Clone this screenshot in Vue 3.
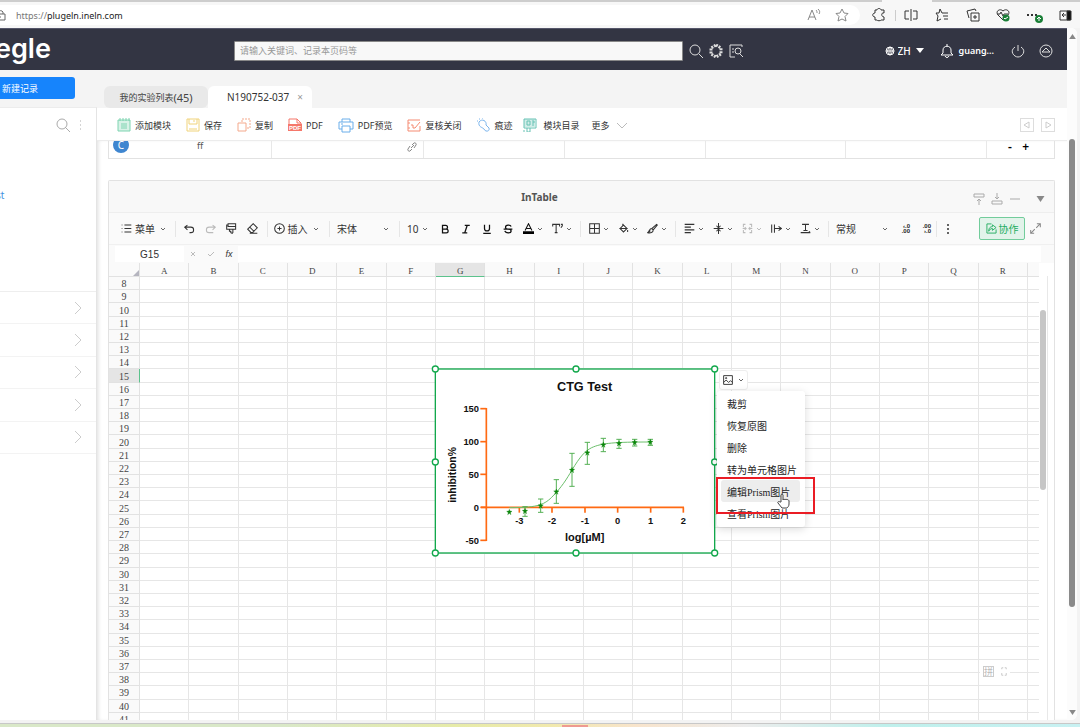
<script setup>
import { ref } from 'vue'

const columns = 'ABCDEFGHIJKLMNOPQR'.split('')
const rows = Array.from({ length: 34 }, (_, i) => i + 8)
const selectedColumn = 'G'
const selectedRow = 15

const keyword = ref('')
const cellName = ref('G15')
const formula = ref('')

const menuItems = ['裁剪', '恢复原图', '删除', '转为单元格图片', '编辑Prism图片', '查看Prism图片']
const activeItem = '编辑Prism图片'

const editTools = [
  { label: '撤销', d: 'M5 3 1 6l4 4M1 6h9a4 4 0 0 1 0 8H8' },
  { label: '重做', d: 'M11 3l4 3-4 4M15 6H6a4 4 0 0 0 0 8h6', muted: true },
  { label: '格式刷', d: 'M3 1h11v4H3zM3 3H1v6h13V3M5 9v3h2v2l2 1 1-1V9' },
  { label: '清除', d: 'M1 9l8-8 6 6-7 7H6zM4 6l6 6M4 15h11' }
]
const textTools = [
  { label: '加粗', d: 'M4 2h5a3 3 0 0 1 0 6H4zM4 8h6a3 3 0 0 1 0 6H4z' },
  { label: '斜体', d: 'M6 2h8M2 14h8M10 2 6 14' },
  { label: '下划线', d: 'M4 1v6a4 4 0 0 0 8 0V1M2 15h12' },
  { label: '删除线', d: 'M13 4c-1-3-9-3-9 1 0 2 2 3 4 3s5 1 5 3c0 4-9 4-10 0M1 8h14' }
]
const cellTools = [
  { label: '边框', d: 'M1 1h14v14H1zM8 1v14M1 8h14' },
  { label: '填充', d: 'M7 1v4M3 8l5-5 5 5-5 5zM3 8h10L8 13zM14 10v3' },
  { label: '样式', d: 'M14 2 7 8l2 2 6-7zM7 8c-4 0-3 4-6 6 4 1 8 0 8-4M5 11l-2 2' }
]
const alignTools = [
  { label: '水平对齐', d: 'M1 2h14M1 6h9M1 10h14M1 14h9' },
  { label: '垂直对齐', d: 'M1 8h14M8 0v6M5 4l3 3 3-3M8 16v-6M5 12l3-3 3 3' },
  { label: '合并', d: 'M5 2H2v4M11 2h3v4M5 14H2v-4M11 14h3v-4M1 8h5M15 8h-5M4 6l2 2-2 2M12 6l-2 2 2 2', muted: true },
  { label: '换行', d: 'M1 2v12M5 2v12M5 8h10M11 5l4 3-4 3' },
  { label: '旋转', d: 'M3 2h10M8 2v9M5 11h6M1 14h14M13 12l2 2' }
]

const points = [
  { x: 253, y: 471 },
  { x: 300, y: 468, top: 455, bottom: 484 },
  { x: 347, y: 452, top: 432, bottom: 472 },
  { x: 394, y: 410, top: 374, bottom: 445 },
  { x: 441, y: 345, top: 295, bottom: 394 },
  { x: 487, y: 293, top: 262, bottom: 328 },
  { x: 535, y: 269, top: 250, bottom: 290 },
  { x: 582, y: 265, top: 253, bottom: 280 },
  { x: 629, y: 262, top: 253, bottom: 273 },
  { x: 676, y: 261, top: 253, bottom: 271 }
]
const star = 'M0-8 2-3 8-2 3 2 5 8 0 4-5 8-3 2-8-2-2-3z'
const yTicks = [
  { v: '150', y: 161 },
  { v: '100', y: 260 },
  { v: '50', y: 358 },
  { v: '0', y: 457 },
  { v: '-50', y: 556 }
]
const xTicks = [
  { v: '-3', x: 283 },
  { v: '-2', x: 381 },
  { v: '-1', x: 480 },
  { v: '0', x: 578 },
  { v: '1', x: 677 },
  { v: '2', x: 775 }
]
const handles = [
  [31, 42], [453, 42], [869, 42], [31, 321], [869, 321], [31, 594], [453, 594], [869, 594]
]
</script>

<template>
  <div class="screen">
    <div class="browser">
      <div class="tab-edge"></div>
      <div class="address">
        <svg class="i12" viewBox="0 0 12 12"><path d="M1 5h8v6H1M2 5V3a3 3 0 0 1 5 0v2M4 8h1" /></svg>
        <span class="url"><span class="scheme">https://</span>plugeln.ineln.com</span>
        <button class="bb soft" aria-label="朗读"><svg class="i14" viewBox="0 0 14 14"><path d="M1 12 5 2l4 10M2 9h6M9 2c1 1 1 2 1 3M11 1c2 2 2 3 1 5" /></svg></button>
        <button class="bb soft" aria-label="收藏"><svg class="i14" viewBox="0 0 14 14"><path d="M7 1l2 4 4 .5-3 3 1 4.500L7 11l-4 2 1-4.500-3-3L5 5z" /></svg></button>
      </div>
      <div class="browser-tools">
        <button class="bb" aria-label="扩展"><svg class="i14" viewBox="0 0 14 14"><path d="M3 2h2c0-2 4-2 4 0h3v3c-3-1-3 4 0 4v3H9c0 1-4 1-4 0H3V9C0 9 0 5 3 5z" /></svg></button>
        <span class="bsep"></span>
        <button class="bb" aria-label="分屏"><svg class="i14" viewBox="0 0 14 14"><path d="M5 3H1v8h4M9 3h4v8H9M7 1v12" /></svg></button>
        <button class="bb" aria-label="收藏夹"><svg class="i14" viewBox="0 0 14 14"><path d="M9 5 7 5 5 1 4 5 1 5l2 3-1 5 4-2M9 5h4M8 8h5M9 11h4" /></svg></button>
        <button class="bb" aria-label="集锦"><svg class="i14" viewBox="0 0 14 14"><path d="M5 5h8v8H5zM9 7v4M7 9h4M3 10 1 3l8-2 1 2" /></svg></button>
        <button class="bb" aria-label="健康"><svg class="i14" viewBox="0 0 14 14"><path d="M7 12 2 7C-1 3 4 0 7 3c3-3 8 0 5 4M1 6h3l1-2 2 4 1-2h4" /><circle cx="10" cy="10" r="3.500" class="badge" /><path class="tick" d="M8 10l1 1 3-2" /></svg></button>
        <button class="bb" aria-label="更多"><svg class="i14 over" viewBox="0 0 14 14"><path class="heavy" d="M0 7h2M4 7h2M8 7h2" /><circle cx="12" cy="11" r="4" class="badge" /><path class="tick" d="M12 13V9M10 11l2-2 2 2" /></svg></button>
        <button class="bb" aria-label="侧栏"><svg class="i14" viewBox="0 0 14 14"><path d="M2 3h10v9H2zM4 7h4M6 5 4 7l2 2" /><path class="solid" d="M9 3h4v9H9z" /></svg></button>
      </div>
    </div>

    <div class="window">
      <div class="site">
        <header class="top">
          <div class="logo">egle</div>
          <input v-model="keyword" class="search" type="text" aria-label="搜索" placeholder="请输入关键词、记录本页码等" />
          <nav class="topnav">
            <button class="tb" aria-label="搜索"><svg class="i14" viewBox="0 0 14 14"><circle cx="6" cy="6" r="5" /><path d="M10 10l4 4" /></svg></button>
            <button class="tb" aria-label="结构"><svg class="i14" viewBox="0 0 14 14"><path class="ring" d="M7 1l5 3v6l-5 3-5-3V4z" /></svg></button>
            <button class="tb" aria-label="高级搜索"><svg class="i14" viewBox="0 0 14 14"><path d="M13 3V1H1v12h5M3 5h2M3 8h2" /><circle cx="9" cy="7" r="3" /><path d="M11 10l3 3" /></svg></button>
            <label class="lang">
              <svg class="i10" viewBox="0 0 10 10"><circle cx="5" cy="5" r="4" /><path d="M1 5h8M5 1v8M5 1C2 3 2 7 5 9c3-2 3-6 0-8" /></svg>
              <select aria-label="语言"><option>ZH</option></select>
              <svg class="caret" viewBox="0 0 8 5"><path d="M0 0h8L4 5z" /></svg>
            </label>
            <button class="user"><svg class="i14" viewBox="0 0 14 14"><path d="M1 11h12l-2-2V6c0-5-8-5-8 0v3zM6 1h2M5 12c1 2 3 2 4 0" /></svg>guang...</button>
            <button class="tb wide" aria-label="退出"><svg class="i14" viewBox="0 0 14 14"><path d="M4 3c-6 4-1 10 3 10s9-6 3-10M7 1v6" /></svg></button>
            <button class="tb wide" aria-label="收起"><svg class="i14" viewBox="0 0 14 14"><circle cx="7" cy="7" r="6" /><path d="M7 4l4 4H3z" /></svg></button>
          </nav>
        </header>

        <div class="body">
          <aside class="side">
            <button class="new">新建记录</button>
            <div class="side-panel">
              <div class="side-tools">
                <button aria-label="查找"><svg class="i14" viewBox="0 0 14 14"><circle cx="6" cy="6" r="5" /><path d="M9 9l5 5" /></svg></button>
                <button aria-label="选项"><svg class="dots" viewBox="0 0 4 12"><path d="M1 2h1M1 6h1M1 10h1" /></svg></button>
              </div>
              <a class="side-link" href="#">st</a>
              <div class="side-list">
                <button v-for="n in 5" :key="n" aria-label="展开"><svg viewBox="0 0 8 14"><path d="M1 1l6 6-6 6" /></svg></button>
              </div>
            </div>
          </aside>

          <main class="main">
            <div class="tabs">
              <button class="tab">我的实验列表<span class="count">(45)</span></button>
              <button class="tab on">N190752-037<span class="x">×</span></button>
            </div>

            <div class="actions">
              <button><svg class="i14 green" viewBox="0 0 14 14"><path class="wash" d="M1 2h12v11H1z" /><path d="M1 2h12v11H1zM3 0v3M6 0v3M9 0v3M12 0v3M4 6h6M4 8h6M4 10h6" /></svg>添加模块</button>
              <button><svg class="i14 yellow" viewBox="0 0 14 14"><path d="M1 1h12v12H1zM3 1v5h8V1M8 2v2M3 11h8" /></svg>保存</button>
              <button><svg class="i14 peach" viewBox="0 0 14 14"><path d="M1 5h8v8H1z" /><path stroke-dasharray="2 1" d="M5 4V1h8v9h-3" /></svg>复制</button>
              <button><svg class="i14 red" viewBox="0 0 14 14"><path d="M1 6V1h8l4 4v2M9 1v4h4" /><path class="fillred" d="M0 6h14v7H0z" /><text x="7" y="12">PDF</text></svg>PDF</button>
              <button><svg class="i16 blue" viewBox="0 0 16 15"><path d="M4 4V1h8v3M4 11H1V4h14v7h-3M4 8h8v6H4zM3 6h2" /></svg>PDF预览</button>
              <button><svg class="i14 coral" viewBox="0 0 14 14"><path d="M13 8v5H1V2h12M1 5h2M1 10h2M4 7h2v3h2l5-6" /></svg>复核关闭</button>
              <button><svg class="i14 sky" viewBox="0 0 14 14"><path d="M3 4c3-4 8-1 7 3l3 3c1 4-4 4-5 1-2-2-6-2-5-7M1 3h1M3 1h1M6 0h1" /></svg>痕迹</button>
              <button class="catalog"><svg class="i14 teal" viewBox="0 0 14 14"><path class="wash" d="M1 1h11v8H1z" /><path d="M1 1h12v9H1zM4 3h3v4H4zM9 3h2v2H9M9 7h2M1 12v2M4 10v4h3v-4" /></svg>模块目录</button>
              <button class="more">更多<svg viewBox="0 0 12 7"><path d="M1 1l5 5 5-5" /></svg></button>
              <div class="pager">
                <button aria-label="上一个"><svg viewBox="0 0 8 8"><path d="M6 1v6L1 4z" /></svg></button>
                <button aria-label="下一个"><svg viewBox="0 0 8 8"><path d="M2 1v6l5-3z" /></svg></button>
              </div>
            </div>

            <div class="scroll">
              <div class="record">
                <div class="c0"><span class="avatar">C</span><span class="ff">ff</span></div>
                <div class="c1"><svg class="i10" viewBox="0 0 10 10"><path d="M4 6l3-3M5 3l2-2c1-1 3 1 2 2L7 6M5 7 3 9C2 10 0 8 1 7l2-3" /></svg></div>
                <div class="c2"></div>
                <div class="c2"></div>
                <div class="c2"></div>
                <div class="c2"></div>
                <div class="c3"><button>-</button><button>+</button></div>
              </div>

              <section class="panel">
                <div class="title">
                  <h2>InTable</h2>
                  <div class="title-tools">
                    <button aria-label="上移"><svg class="i12" viewBox="0 0 12 12"><path d="M1 1h10v3H1zM6 12V6M4 8l2-2 2 2" /></svg></button>
                    <button aria-label="下移"><svg class="i12" viewBox="0 0 12 12"><path d="M1 8h10v3H1zM6 0v6M4 4l2 2 2-2" /></svg></button>
                    <button aria-label="最小化"><svg class="i12" viewBox="0 0 12 12"><path d="M1 6h10" /></svg></button>
                    <button class="fold" aria-label="折叠"><svg viewBox="0 0 8 6"><path d="M0 0h8L4 6z" /></svg></button>
                  </div>
                </div>

                <div class="ribbon">
                  <button class="t menu"><svg class="ic" viewBox="0 0 16 16"><path d="M5 3h10M5 8h10M5 13h10M1 3h1M1 8h1M1 13h1" /></svg>菜单<svg class="chev" viewBox="0 0 6 4"><path d="M1 1l2 2 2-2" /></svg></button>
                  <span class="sep"></span>
                  <button v-for="t in editTools" :key="t.label" class="t" :class="{ muted: t.muted }" :aria-label="t.label"><svg class="ic" viewBox="0 0 16 16"><path :d="t.d" /></svg></button>
                  <span class="sep"></span>
                  <button class="t insert"><svg class="ic" viewBox="0 0 16 16"><circle cx="8" cy="8" r="7" /><path d="M8 5v6M5 8h6" /></svg>插入<svg class="chev" viewBox="0 0 6 4"><path d="M1 1l2 2 2-2" /></svg></button>
                  <span class="sep"></span>
                  <label class="sel"><select aria-label="字体"><option>宋体</option></select><svg class="chev" viewBox="0 0 6 4"><path d="M1 1l2 2 2-2" /></svg></label>
                  <span class="sep"></span>
                  <label class="sel size"><select aria-label="字号"><option>10</option></select><svg class="chev" viewBox="0 0 6 4"><path d="M1 1l2 2 2-2" /></svg></label>
                  <button v-for="t in textTools" :key="t.label" class="t strong" :aria-label="t.label"><svg class="ic" viewBox="0 0 16 16"><path :d="t.d" /></svg></button>
                  <button class="t drop" aria-label="字体颜色"><svg class="ic color" viewBox="0 0 16 16"><path d="M3 11 8 1l5 10M5 8h6" /><path class="bar" d="M0 14h16" /></svg><svg class="chev" viewBox="0 0 6 4"><path d="M1 1l2 2 2-2" /></svg></button>
                  <button class="t drop" aria-label="上下标"><svg class="ic" viewBox="0 0 16 16"><path d="M1 5V2h10v3M6 2v12M4 14h4M13 2h2v2l-2 3" /></svg><svg class="chev" viewBox="0 0 6 4"><path d="M1 1l2 2 2-2" /></svg></button>
                  <span class="sep"></span>
                  <button v-for="t in cellTools" :key="t.label" class="t drop" :aria-label="t.label"><svg class="ic" viewBox="0 0 16 16"><path :d="t.d" /></svg><svg class="chev" viewBox="0 0 6 4"><path d="M1 1l2 2 2-2" /></svg></button>
                  <span class="sep"></span>
                  <button v-for="t in alignTools" :key="t.label" class="t drop" :class="{ muted: t.muted }" :aria-label="t.label"><svg class="ic" viewBox="0 0 16 16"><path :d="t.d" /></svg><svg class="chev" viewBox="0 0 6 4"><path d="M1 1l2 2 2-2" /></svg></button>
                  <span class="sep"></span>
                  <label class="sel"><select aria-label="数字格式"><option>常规</option></select><svg class="chev" viewBox="0 0 6 4"><path d="M1 1l2 2 2-2" /></svg></label>
                  <button class="t dec" aria-label="减少小数位"><span>‹.0</span><span>.00</span></button>
                  <button class="t dec" aria-label="增加小数位"><span>.00</span><span>›.0</span></button>
                  <span class="sep tight"></span>
                  <button class="t narrow" aria-label="更多"><svg class="dots" viewBox="0 0 4 12"><path d="M1 2h2M1 6h2M1 10h2" /></svg></button>
                  <button class="collab"><svg viewBox="0 0 12 12"><path d="M6 1H1v10h10V7M3 9c0-4 2-5 4-5V2l4 3-4 3V6C5 6 4 7 3 9" /></svg>协作</button>
                  <button class="t expand" aria-label="全屏"><svg class="ic" viewBox="0 0 16 16"><path d="M10 1h5v5M15 1l-6 6M6 15H1v-5M1 15l6-6" /></svg></button>
                </div>

                <div class="formula">
                  <input v-model="cellName" class="name" type="text" aria-label="单元格" />
                  <button class="f" aria-label="取消"><svg viewBox="0 0 8 8"><path d="M2 2l4 4M6 2 2 6" /></svg></button>
                  <button class="f" aria-label="确认"><svg viewBox="0 0 8 8"><path d="M1 4l2 2 4-4" /></svg></button>
                  <button class="f fx">fx</button>
                  <input v-model="formula" class="expr" type="text" aria-label="公式" />
                </div>

                <div class="sheet">
                  <table class="grid">
                    <thead>
                      <tr>
                        <th class="corner" aria-label="全选"><svg viewBox="0 0 6 6"><path d="M6 0v6H0z" /></svg></th>
                        <th v-for="c in columns" :key="c" :class="{ picked: c === selectedColumn }">{{ c }}</th>
                        <th></th>
                      </tr>
                    </thead>
                    <tbody>
                      <tr v-for="r in rows" :key="r">
                        <th :class="{ picked: r === selectedRow }">{{ r }}</th>
                        <td v-for="c in columns" :key="c"></td>
                        <td class="last"></td>
                      </tr>
                    </tbody>
                  </table>
                  <div class="sheet-bar"><div class="sheet-thumb"></div></div>

                  <svg class="chart" viewBox="31 42 838 552" role="img" aria-label="CTG Test">
                    <rect class="frame" x="31" y="42" width="838" height="552" />
                    <text class="ct" x="479" y="107">CTG Test</text>
                    <text class="cy" transform="translate(92 360) rotate(-90)">inhibition%</text>
                    <text class="cx" x="479" y="557">log[µM]</text>
                    <path class="axis" d="M184 159V558M168 457H777" />
                    <g v-for="t in yTicks" :key="'y' + t.v">
                      <path class="axis" :d="`M166 ${t.y}h18`" />
                      <text class="ty" x="162" :y="t.y + 10">{{ t.v }}</text>
                    </g>
                    <g v-for="t in xTicks" :key="'x' + t.v">
                      <path class="axis" :d="`M${t.x} 457v16`" />
                      <text class="tx" :x="t.x" y="506">{{ t.v }}</text>
                    </g>
                    <path class="curve" d="M253 458C330 458 355 452 380 427C410 397 425 372 441 345C465 305 480 288 500 278C530 264 570 261 676 261" />
                    <g v-for="p in points" :key="p.x">
                      <path v-if="p.top" class="err" :d="`M${p.x - 8} ${p.top}h16M${p.x} ${p.top}V${p.bottom}M${p.x - 8} ${p.bottom}h16`" />
                      <path class="star" :d="star" :transform="`translate(${p.x} ${p.y})`" />
                    </g>
                    <circle v-for="(h, i) in handles" :key="i" class="handle" :cx="h[0]" :cy="h[1]" r="9" />
                  </svg>

                  <button class="pic" aria-label="图片"><svg class="ic" viewBox="0 0 16 16"><path d="M1 1h14v14H1zM1 12l4-4 4 4 3-3 3 3" /><circle cx="5" cy="5" r="1" /></svg><svg class="chev" viewBox="0 0 6 4"><path d="M1 1l2 2 2-2" /></svg></button>
                  <div class="popup" role="menu">
                    <button v-for="m in menuItems" :key="m" role="menuitem" :class="{ on: m === activeItem }">{{ m }}</button>
                  </div>
                  <div class="mark"></div>
                  <svg class="hand" viewBox="0 0 12 16"><path d="M4 9V2c0-1 2-1 2 0v5c0-1 2-1 2 0 0-1 2-1 2 0 0-1 2 0 2 1v3c0 2-1 3-2 4H5L1 10c-1-1 1-2 2-1z" /></svg>
                  <div class="ime"><span>拼</span><svg viewBox="0 0 8 12"><path d="M1 3V1h2M5 1h2v2M1 8v3h2M5 11h2V8" /></svg></div>
                </div>
              </section>
            </div>
          </main>
        </div>
      </div>

      <div class="vbar">
        <svg viewBox="0 0 8 6"><path d="M4 0l4 6H0z" /></svg>
        <div class="vtrack"><div class="vthumb"></div></div>
        <svg viewBox="0 0 8 6"><path d="M0 0h8L4 6z" /></svg>
      </div>
    </div>
    <div class="desk"><span></span></div>
  </div>
</template>

<style>
body { margin: 0; background: #f2f2f2; }
</style>

<style scoped>
* { box-sizing: border-box; }
.screen { height: 100vh; display: flex; flex-direction: column; overflow: hidden; background: #f3f3f3; font-family: "Noto Sans", "Noto Sans CJK SC", sans-serif; font-size: 9px; color: #333; }
button, input, select { font: inherit; color: inherit; border: 0; background: none; padding: 0; margin: 0; outline: 0; }
button { display: flex; align-items: center; justify-content: center; white-space: nowrap; }
select { appearance: none; }
svg { display: block; flex: none; fill: none; stroke: currentColor; stroke-width: 1; }
.i10 { width: 10px; height: 10px; }
.i12 { width: 12px; height: 12px; }
.i14 { width: 14px; height: 14px; }
.i16 { width: 16px; height: 15px; }
.over { overflow: visible; }

.browser { position: relative; flex: none; height: 28px; display: flex; align-items: center; border-top: 2px solid #cdcdcd; background: #f7f7f7; }
.tab-edge { position: absolute; top: -2px; right: 148px; width: 50px; height: 2px; background: #f7f7f7; }
.address { flex: 1; height: 20px; display: flex; align-items: center; padding-right: 4px; border-radius: 0 10px 10px 0; background: #fff; color: #666; }
.address .i12 { margin-left: -4px; }
.url { flex: 1; margin-left: 8px; font-size: 9px; color: #222; font-family: "Noto Sans", sans-serif; }
.scheme { color: #777; }
.bb { width: 31px; height: 20px; color: #333; }
.bb.soft { width: 28px; color: #888; }
.browser-tools { width: 220px; padding-left: 4px; display: flex; align-items: center; }
.bsep { width: 1px; height: 11px; background: #ccc; }
.heavy { stroke-width: 2; }
.badge { fill: #1a7f37; stroke: none; }
.tick { stroke: #fff; }
.solid { fill: #111; }

.window { flex: 1; min-height: 0; margin-right: 3px; display: flex; background: #fff; border-radius: 0 6px 6px 0; overflow: hidden; }
.site { flex: 1; min-width: 0; display: flex; flex-direction: column; background: #f4f4f4; }
.top { flex: none; height: 42px; display: flex; align-items: center; padding-top: 2px; background: #333543; border-top: 1px solid #55566a; color: #fff; }
.logo { width: 239px; margin-left: -5px; font: 600 27px/36px Inter, sans-serif; padding-bottom: 4px; }
.search { flex: 1; min-width: 0; height: 20px; padding: 0 5px; border: 1px solid #888; border-radius: 1px; background: #f8f8f8; color: #333; font-size: 9px; }
.search::placeholder { color: #999; opacity: 1; }
.topnav { width: 384px; display: flex; align-items: center; padding: 0 7px 0 3px; color: #ddd; }
.tb { width: 20px; height: 20px; }
.tb.wide { width: 28px; }
.ring { stroke-width: 3; stroke-dasharray: 2 1; }
.lang { margin-left: auto; display: flex; align-items: center; gap: 3px; color: #fff; font-size: 10px; font-weight: 500; }
.lang select { width: 15px; }
.caret { width: 8px; height: 5px; fill: #fff; stroke: none; }
.user { margin: 0 10px 0 16px; gap: 5px; color: #fff; font-size: 9px; font-weight: 600; }

.body { flex: 1; min-height: 0; display: flex; }
.side { flex: none; width: 97px; display: flex; flex-direction: column; overflow: hidden; }
.new { flex: none; height: 22px; width: 75px; margin: 7px 0 8px; justify-content: flex-start; padding-left: 2px; border-radius: 0 3px 3px 0; background: #1684fc; color: #fff; }
.side-panel { flex: 1; background: #fff; border-right: 1px solid #e4e4e4; border-top: 1px solid #ececec; }
.side-tools { display: flex; justify-content: flex-end; align-items: center; gap: 9px; height: 34px; padding-right: 13px; color: #aaa; }
.dots { width: 4px; height: 12px; stroke-width: 1; }
.side-tools button { height: 14px; }
.side-link { display: block; margin: 44px 0 0 -4px; font-size: 10px; line-height: 18px; color: #3f8fe0; text-decoration: none; }
.side-list { display: grid; grid-template-rows: repeat(5, 1fr); height: 163px; margin-top: 87px; border-top: 1px solid #eee; }
.side-list button { justify-content: flex-end; padding-right: 14px; border-bottom: 1px solid #f3f3f3; color: #ccc; }
.side-list svg { width: 8px; height: 14px; }

.main { flex: 1; min-width: 0; display: flex; flex-direction: column; background: #fff; }
.tabs { flex: none; display: flex; align-items: flex-end; height: 38px; padding-left: 7px; background: #f4f4f4; }
.tab { width: 104px; height: 22px; border-radius: 6px; background: #e9e9e9; font-size: 9px; color: #444; }
.count { font-size: 11px; }
.tab.on { padding-left: 10px; border-radius: 6px 6px 0 0; background: #fff; font-size: 10px; color: #333; }
.x { margin-left: 8px; color: #999; }
.actions { flex: none; height: 33px; display: flex; align-items: center; gap: 15px; padding: 2px 12px 0 20px; border-bottom: 1px solid #ececec; }
.actions > button { gap: 4px; }
.actions > .catalog { margin-left: -4px; gap: 6px; }
.actions > .more { margin-left: -3px; gap: 7px; }
.more svg { width: 12px; height: 7px; color: #bbb; }
.green { color: #7fd4b1; } .yellow { color: #f0d37a; } .peach { color: #f4a98c; } .red { color: #f5776a; }
.blue { color: #6aaeea; } .coral { color: #f58b73; } .sky { color: #7ab4ec; } .teal { color: #66c2b4; }
.wash { fill: currentColor; opacity: .3; stroke: none; }
.fillred { fill: #f5776a; stroke: none; }
.red text { font: bold 6px "Liberation Sans", sans-serif; fill: #fff; stroke: none; text-anchor: middle; }
.pager { margin-left: auto; display: flex; gap: 7px; color: #ccc; }
.pager button { width: 14px; height: 14px; border: 1px solid #ddd; }
.pager svg { width: 8px; height: 8px; }

.scroll { flex: 1; min-height: 0; display: flex; flex-direction: column; padding: 0 12px 0 11px; overflow: hidden; box-shadow: inset 3px 0 4px -2px #ddd; }
.record { flex: none; height: 18px; display: flex; border: 1px solid #e2e2e2; border-top: 0; }
.record > div { border-right: 1px solid #e8e8e8; display: flex; }
.record > .c0 { width: 163px; flex: none; padding-left: 4px; }
.c1 { width: 152px; flex: none; justify-content: flex-end; padding-right: 6px; padding-top: 1px; color: #888; }
.c2 { flex: 1; }
.record > .c3 { width: 67px; flex: none; border: 0; padding: 0 25px 6px 21px; justify-content: space-between; font-size: 12px; font-weight: 600; color: #000; }
.avatar { width: 16px; height: 16px; margin-top: -4px; border-radius: 50%; background: #3f86d0; color: #fff; font-size: 10px; line-height: 17px; text-align: center; }
.ff { margin-left: 68px; line-height: 10px; color: #555; }

.panel { flex: 1; min-height: 0; margin-top: 21px; display: flex; flex-direction: column; border: 1px solid #e2e2e2; border-bottom: 0; border-radius: 2px 2px 0 0; background: #fafafa; }
.title { position: relative; flex: none; height: 32px; display: flex; align-items: center; justify-content: center; border-bottom: 1px solid #eee; background: #f8f8f8; }
h2 { margin: 0; padding-right: 84px; font-size: 10px; font-weight: 700; color: #555; }
.title-tools { position: absolute; right: 9px; top: 12px; display: flex; align-items: center; gap: 6px; color: #aaa; }
.fold { margin-left: 9px; }
.fold svg { width: 9px; height: 6px; fill: #888; stroke: none; }

.ribbon { flex: none; height: 32px; display: flex; align-items: center; padding: 0 8px 0 12px; border-bottom: 1px solid #f0f0f0; font-size: 10px; color: #333; }
.ic { width: 11px; height: 11px; stroke-width: 1.500; }
.chev { width: 6px; height: 4px; color: #666; }
.t { flex: none; width: 21px; height: 22px; }
.t.menu { width: 50px; gap: 3px; padding-right: 5px; }
.t.insert { width: 54px; gap: 3px; padding-right: 4px; }
.menu .chev, .insert .chev { margin-left: 2px; }
.t.drop { width: 29px; justify-content: flex-start; padding-left: 5px; gap: 3px; }
.t.muted, .t.muted .chev { color: #bbb; }
.t.strong { color: #111; }
.t.strong .ic { width: 10px; height: 10px; stroke-width: 2; }
.t.narrow { width: 16px; }
.narrow .dots { stroke-width: 1.500; }
.bar { stroke: #000; stroke-width: 4; }
.color { color: #111; }
.sep { flex: none; width: 8px; height: 16px; border-left: 1px solid #e6e6e6; margin-left: 4px; margin-right: -4px; }
.sep.tight { width: 4px; margin-left: 0; margin-right: 0; }
.sel { flex: none; width: 62px; padding: 0 6px 0 4px; display: flex; align-items: center; justify-content: space-between; }
.sel select { width: 30px; }
.sel.size { width: 31px; padding-right: 6px; }
.size select { width: 14px; }
.t.dec { flex-direction: column; align-items: flex-end; padding-right: 5px; font: 700 6px/5px "Liberation Sans", sans-serif; color: #222; }
.collab { flex: none; width: 46px; height: 23px; margin-left: auto; gap: 2px; border: 1px solid #72cc9b; border-radius: 2px; background: #e2f3ea; color: #22ad5f; }
.collab svg { width: 11px; height: 11px; }
.t.expand { color: #888; }

.formula { flex: none; height: 18px; display: flex; align-items: center; padding: 0 13px 0 6px; }
.name { width: 69px; height: 16px; background: #fff; text-align: center; font: 10px "Liberation Sans", sans-serif; }
.f { width: 18px; height: 16px; color: #bbb; }
.f svg { width: 8px; height: 8px; }
.f.fx { color: #333; font: italic 9px "Liberation Sans", sans-serif; }
.expr { flex: 1; min-width: 0; height: 16px; background: #fff; }

.sheet { position: relative; flex: 1; min-height: 0; display: flex; overflow: hidden; background: #fff; }
.grid { flex: 1; min-width: 0; display: block; font: 10px "Liberation Serif", "Noto Sans CJK SC", serif; color: #444; }
.grid thead { display: block; height: 14px; }
.grid tbody { display: grid; grid-template-rows: repeat(34, 1fr); height: 449px; }
.grid tr { display: grid; grid-template-columns: 31px repeat(18, 1fr) 11px; min-height: 0; }
.grid thead tr { height: 14px; }
.grid th { display: flex; align-items: center; justify-content: center; padding: 2px 0 0; min-height: 0; min-width: 0; border-right: 1px solid #e2e2e2; border-bottom: 1px solid #e2e2e2; background: #fafafa; font-weight: 400; line-height: 10px; }
.grid td { display: block; padding: 0; min-width: 0; border-right: 1px solid #e6e6e6; border-bottom: 1px solid #e6e6e6; }
.grid thead th { font-size: 9px; }
.grid thead th:last-child, .grid td.last { border-right: 0; }
.grid thead .picked { background: #e5e5e5; border-bottom-color: #5cc28c; }
.grid tbody .picked { background: #e5e5e5; border-right-color: #5cc28c; }
.grid .corner { align-items: flex-end; justify-content: flex-end; }
.corner svg { width: 6px; height: 6px; fill: #b5b5bf; stroke: none; }
.sheet-bar { flex: none; width: 9px; margin-right: 6px; margin-top: 13px; padding: 34px 1px 0; border-right: 1px solid #e8e8e8; }
.sheet-thumb { height: 180px; border-radius: 3px; background: #c6c6c6; }

.chart { position: absolute; left: 326px; top: 106px; width: 280px; height: 184px; overflow: visible; font-family: "Liberation Sans", sans-serif; font-weight: 700; }
.chart text { fill: #111; stroke: none; text-anchor: middle; font-size: 28px; }
.chart .ct { font-size: 38px; }
.chart .cy { font-size: 31px; }
.chart .cx { font-size: 33px; }
.chart .ty { text-anchor: end; }
.frame { fill: #fff; stroke: #12a84c; stroke-width: 4; }
.axis { stroke: #ff6a13; stroke-width: 5; }
.curve { stroke: #6cbf6c; stroke-width: 3; }
.err { stroke: #55b055; stroke-width: 3; }
.star { fill: #0b860b; stroke: #0b860b; }
.handle { fill: #fff; stroke: #12a84c; stroke-width: 4; }

.pic { position: absolute; left: 610px; top: 107px; width: 29px; height: 20px; gap: 5px; border: 1px solid #eee; border-radius: 3px; background: #fff; }
.pic .ic { width: 10px; height: 10px; }
.popup { position: absolute; left: 608px; top: 128px; width: 88px; padding: 1px 4px 3px; border-radius: 3px; background: #fff; box-shadow: 0 2px 8px rgba(0, 0, 0, .15); font: 10px "Liberation Serif", "Noto Sans CJK SC", serif; }
.popup button { width: 79px; height: 22px; padding-left: 6px; justify-content: flex-start; border-radius: 3px; color: #222; }
.popup .on { background: #ededed; }
.mark { position: absolute; left: 607px; top: 214px; width: 99px; height: 37px; border: 2px solid #ea1c24; }
.hand { position: absolute; left: 668px; top: 230px; width: 12px; height: 16px; color: #444; fill: #fff; overflow: visible; }
.ime { position: absolute; right: 44px; top: 399px; width: 30px; height: 18px; display: flex; align-items: center; gap: 7px; padding-left: 3px; background: #fff; color: #bbb; }
.ime span { width: 11px; height: 11px; border: 1px solid #ccc; font-size: 9px; line-height: 9px; text-align: center; }
.ime svg { width: 6px; height: 9px; }

.vbar { flex: none; width: 10px; display: flex; flex-direction: column; align-items: center; padding: 6px 0 5px; background: #fcfcfc; }
.vbar svg { width: 7px; height: 5px; fill: #888; stroke: none; }
.vtrack { flex: 1; width: 6px; padding-top: 100px; }
.vthumb { height: 82%; border-radius: 3px; background: #8a8a8a; }
.desk { flex: none; height: 4px; margin-top: 3px; display: flex; justify-content: center; align-items: flex-end; border-top: 1px solid #c8c8c8; background: linear-gradient(90deg, #d9e8c8, #d9e8c8 26%, #e6eba8 42%, #f1e9ad 51%, #f8e4cc 59%, #ececec 69%, #bff0ec 82%, #c8f1f2); }
.desk span { width: 26px; height: 2px; margin-left: 70px; background: #ee9a90; }
</style>
